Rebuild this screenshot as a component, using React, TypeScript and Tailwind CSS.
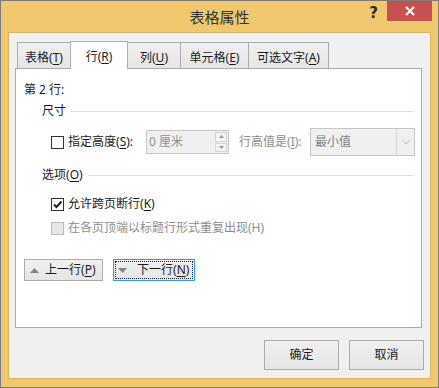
import React from "react";

const font = { fontFamily: "'Noto Sans', 'Noto Sans CJK SC', sans-serif" };

const Key = ({ k }: { k: string }) => (
  <>
    (<span className="underline underline-offset-2">{k}</span>)
  </>
);

const Tab = ({ label, k, w, active }: { label: string; k: string; w: string; active?: boolean }) => (
  <div
    className={
      active
        ? `${w} -ml-px relative z-10 h-[28px] flex items-center justify-center pt-[2px] border border-b-0 border-[#acacac] bg-white text-[#1a1a1a]`
        : `${w} -ml-px h-[27px] flex items-center justify-center pt-[3px] border border-b-0 border-[#acacac] bg-gradient-to-b from-[#f0f0f0] to-[#e5e5e5] text-[#1a1a1a]`
    }
  >
    {label}
    <Key k={k} />
  </div>
);

const Group = ({ title, k }: { title: string; k?: string }) => (
  <div className="flex items-center h-4 pl-[26px] pr-[7px] gap-[5px]">
    <span className="text-[#1a1a1a]">
      {title}
      {k && <Key k={k} />}
    </span>
    <div className="flex-1 h-px bg-[#dde1e6]" />
  </div>
);

const App = () => {
  return (
    <div
      className="w-[439px] h-[388px] border border-[#7c7c7c] bg-[#f1c86e] px-[7px] pb-[8px] flex flex-col text-[12px] leading-4"
      style={font}
    >
      {/* title bar */}
      <div className="h-[31px] grid grid-cols-[1fr_auto_1fr]">
        <div />
        <div className="pt-[6px] text-[15px] leading-5 text-[#333]">表格属性</div>
        <div className="flex justify-end items-start -mr-[1px]">
          <span className="mt-[4px] mr-[9px] text-[15px] font-bold text-[#2a2a2a]" style={{ fontFamily: "'DejaVu Sans', sans-serif" }}>
            ?
          </span>
          <div className="w-[45px] h-[20px] bg-[#c75050] flex items-center justify-center">
            <svg width="10" height="10" viewBox="0 0 10 10">
              <path d="M1 1 L9 9 M9 1 L1 9" stroke="#fff" strokeWidth="2" />
            </svg>
          </div>
        </div>
      </div>

      {/* content */}
      <div className="flex-1 border border-[#d9b25f] bg-[#f0f0f0] pt-[8px] pl-[6px] pr-[7px] pb-[8px] flex flex-col">
        <div className="flex items-end h-[28px] pl-[3px]">
          <Tab label="表格" k="T" w="w-[54px]" />
          <Tab label="行" k="R" w="w-[58px]" active />
          <Tab label="列" k="U" w="w-[54px]" />
          <Tab label="单元格" k="E" w="w-[69px]" />
          <Tab label="可选文字" k="A" w="w-[81px]" />
        </div>

        <div className="-mt-px w-[407px] h-[260px] border border-[#acacac] bg-white pt-[13px] pl-[8px] flex flex-col">
          <div className="h-4 text-[#1a1a1a]">第 2 行:</div>

          <div className="mt-[5px] -ml-[8px]">
            <Group title="尺寸" />
          </div>

          <div className="mt-[11px] h-[24px] flex items-center pl-[27px]">
            <div className="w-[13px] h-[13px] border border-[#333] bg-white" />
            <span className="ml-[4px] w-[78px] text-[#1a1a1a]">
              指定高度<Key k="S" />:
            </span>
            <div className="w-[83px] h-[24px] border border-[#c6c6c6] bg-[#f0f0f0] flex items-center">
              <span className="flex-1 pl-[2px] text-[#8f8f8f]">0 厘米</span>
              <div className="w-[13px] h-full flex flex-col py-[1px] pr-[1px] gap-px">
                <div className="flex-1 border border-[#d4d4d4] bg-[#f4f4f4] flex items-center justify-center">
                  <svg width="5" height="3" viewBox="0 0 5 3">
                    <path d="M0 3 L2.5 0 L5 3 Z" fill="#9a9a9a" />
                  </svg>
                </div>
                <div className="flex-1 border border-[#d4d4d4] bg-[#f4f4f4] flex items-center justify-center">
                  <svg width="5" height="3" viewBox="0 0 5 3">
                    <path d="M0 0 L2.5 3 L5 0 Z" fill="#9a9a9a" />
                  </svg>
                </div>
              </div>
            </div>
            <span className="ml-[10px] w-[71px] text-[#8d8d8d]">
              行高值是<Key k="I" />:
            </span>
            <div className="w-[105px] h-[28px] border border-[#c6c6c6] bg-[#f0f0f0] flex items-center">
              <span className="flex-1 pl-[4px] text-[#7d7d7d]">最小值</span>
              <div className="w-[18px] h-full border-l border-[#d6d6d6] flex items-center justify-center">
                <svg width="8" height="5" viewBox="0 0 8 5">
                  <path d="M0.5 0.5 L4 4 L7.5 0.5" stroke="#b8b8b8" fill="none" strokeWidth="1" />
                </svg>
              </div>
            </div>
          </div>

          <div className="mt-[13px] -ml-[8px]">
            <Group title="选项" k="O" />
          </div>

          <div className="mt-[13px] h-4 flex items-center pl-[27px]">
            <div className="w-[13px] h-[13px] border border-[#333] bg-white flex items-center justify-center">
              <svg width="11" height="11" viewBox="0 0 11 11">
                <path d="M2 5.5 L4.5 8 L9.5 2.5" stroke="#1e1e1e" strokeWidth="2" fill="none" />
              </svg>
            </div>
            <span className="ml-[4px] text-[#1a1a1a]">
              允许跨页断行<Key k="K" />
            </span>
          </div>

          <div className="mt-[8px] h-4 flex items-center pl-[27px]">
            <div className="w-[13px] h-[13px] border border-[#bcbcbc] bg-[#e6e6e6]" />
            <span className="ml-[4px] text-[#8d8d8d]">在各页顶端以标题行形式重复出现(H)</span>
          </div>

          <div className="mt-[23px] flex gap-[10px]">
            <div className="w-[79px] h-[22px] border border-[#acacac] bg-gradient-to-b from-[#f0f0f0] to-[#e5e5e5] flex items-center pl-[5px] text-[#1a1a1a]">
              <svg width="9" height="5" viewBox="0 0 9 5">
                <path d="M0 5 L4.5 0 L9 5 Z" fill="#858585" />
              </svg>
              <span className="ml-[6px]">
                上一行<Key k="P" />
              </span>
            </div>
            <div className="w-[82px] h-[22px] border border-[#3399ff] bg-gradient-to-b from-[#f0f0f0] to-[#e5e5e5] p-[1px]">
              <div className="h-full border border-dotted border-[#222] flex items-center pl-[2px] text-[#1a1a1a]">
                <svg width="9" height="5" viewBox="0 0 9 5">
                  <path d="M0 0 L4.5 5 L9 0 Z" fill="#858585" />
                </svg>
                <span className="ml-[10px]">
                  下一行<Key k="N" />
                </span>
              </div>
            </div>
          </div>
        </div>

        <div className="mt-[12px] flex justify-end gap-[10px] pr-[-1px]">
          <div className="w-[75px] h-[30px] border border-[#acacac] bg-gradient-to-b from-[#f0f0f0] to-[#e5e5e5] flex items-center justify-center text-[#1a1a1a]">
            确定
          </div>
          <div className="w-[75px] h-[30px] -mr-[1px] border border-[#acacac] bg-gradient-to-b from-[#f0f0f0] to-[#e5e5e5] flex items-center justify-center text-[#1a1a1a]">
            取消
          </div>
        </div>
      </div>
    </div>
  );
};

export default App;
